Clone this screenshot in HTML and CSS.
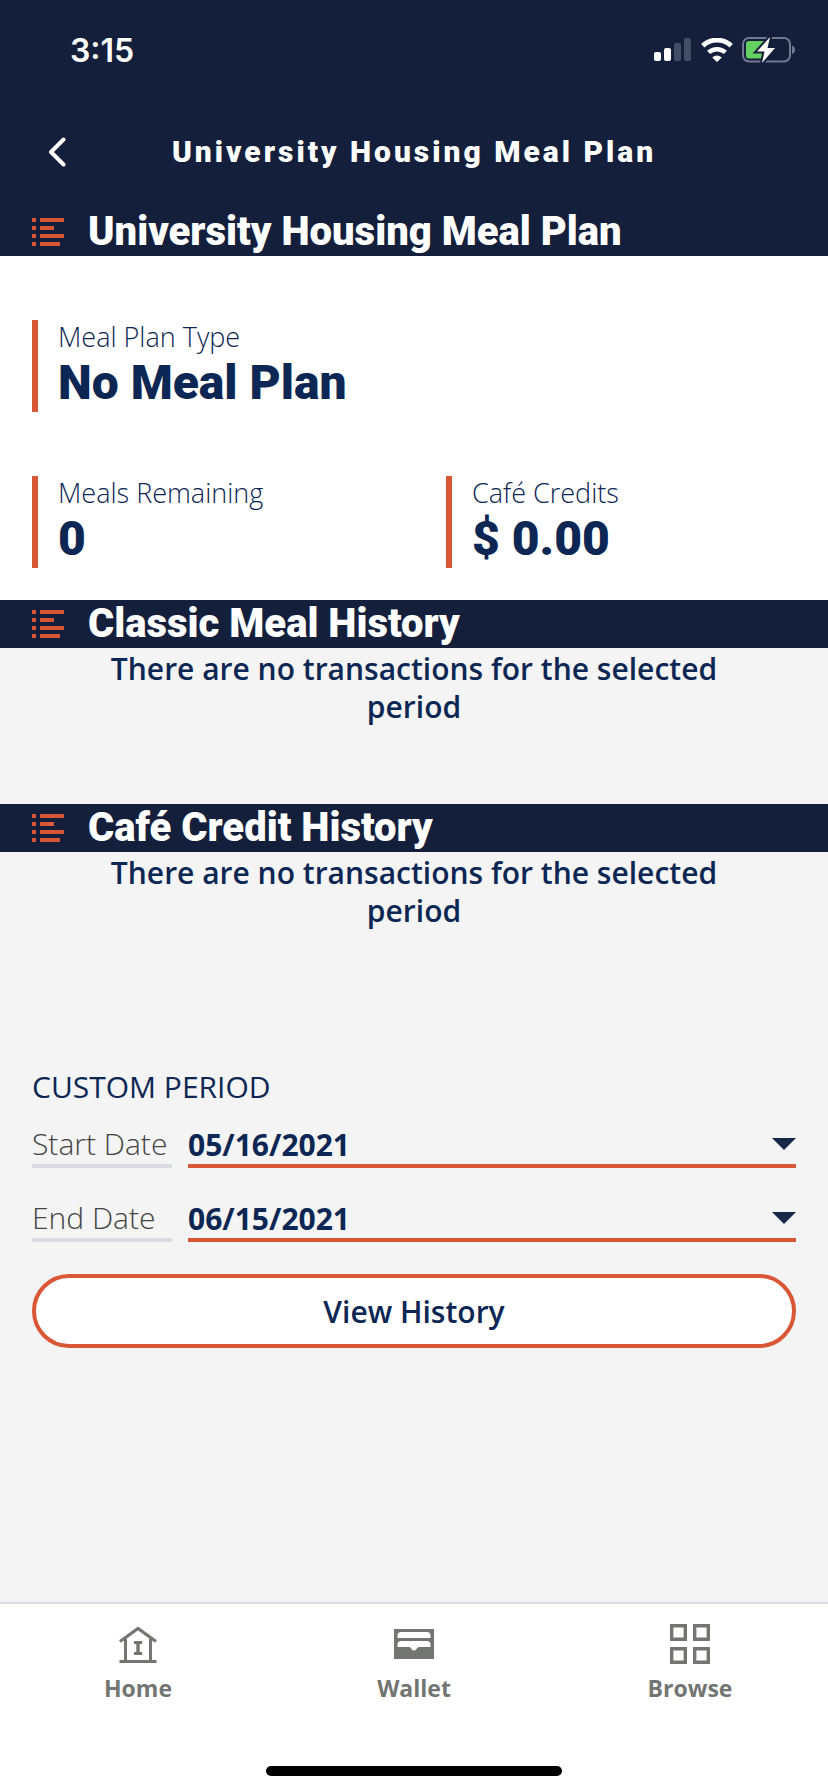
FILE: index.html
```html
<!DOCTYPE html>
<html lang="en">
<head>
<meta charset="utf-8">
<meta name="viewport" content="width=device-width, initial-scale=1">
<title>University Housing Meal Plan</title>
<link rel="stylesheet" href="styles.css">
</head>
<body>
<div class="app">
  <svg class="sprite" width="0" height="0" aria-hidden="true">
    <symbol id="list" viewBox="0 0 32 28">
      <path d="M0 0h4v4H0zM8 0h24v4H8zM0 8h4v4H0zM8 8h14v4H8zM0 16h4v4H0zM8 16h24v4H8zM0 24h4v4H0zM8 24h20v4H8z"/>
    </symbol>
    <symbol id="caret" viewBox="0 0 24 12">
      <path d="M0 0h24L12 12z"/>
    </symbol>
  </svg>

  <header class="top">
    <div class="status">
      <span class="time">3:15</span>
      <div class="indicators">
        <svg width="38" height="24" viewBox="0 0 38 24" role="img" aria-label="Signal strength">
          <rect x="0" y="14" width="7" height="9" rx="2" fill="#fff"/>
          <rect x="10" y="10" width="7" height="13" rx="2" fill="#fff"/>
          <rect x="20" y="5" width="7" height="18" rx="2" fill="#444d66"/>
          <rect x="30" y="0" width="7" height="23" rx="2" fill="#444d66"/>
        </svg>
        <svg width="32" height="24" viewBox="0 0 32 24" role="img" aria-label="Wi-Fi">
          <path d="M1.800 7.800A20.500 20.500 0 0 1 30.200 7.800" fill="none" stroke="#fff" stroke-width="4.800"/>
          <path d="M7.600 14.400A12.600 12.600 0 0 1 24.400 14.400" fill="none" stroke="#fff" stroke-width="4.600"/>
          <path d="M16 24l-4.800-4.600q4.800-3.800 9.600 0z" fill="#fff"/>
        </svg>
        <svg width="54" height="28" viewBox="0 0 54 28" role="img" aria-label="Battery charging">
          <rect x="1" y="2" width="47" height="23.500" rx="6" fill="none" stroke="#727990" stroke-width="2"/>
          <path d="M50 9.500q3 1.200 3 4.300t-3 4.300z" fill="#727990"/>
          <rect x="4" y="5" width="20" height="17.500" rx="3" fill="#65d062"/>
          <path d="M28 1L15 15.500h7.500L20 27 33 12h-7.500z" fill="#fff" stroke="#141f3c" stroke-width="4" paint-order="stroke"/>
        </svg>
      </div>
    </div>
    <div class="titlebar">
      <button class="back" type="button" aria-label="Back">
        <svg width="18" height="30" viewBox="0 0 18 30"><path d="M15.500 2.500L3 15l12.500 12.500" fill="none" stroke="#fff" stroke-width="4" stroke-linecap="round" stroke-linejoin="round"/></svg>
      </button>
      <h1 class="title">University Housing Meal Plan</h1>
    </div>
  </header>

  <main class="content">
    <section>
      <h2 class="bar"><svg class="bar-icon"><use href="#list"/></svg>University Housing Meal Plan</h2>
      <dl class="stats">
        <div class="stat wide"><dt>Meal Plan Type</dt><dd>No Meal Plan</dd></div>
        <div class="stat"><dt>Meals Remaining</dt><dd>0</dd></div>
        <div class="stat"><dt>Café Credits</dt><dd>$ 0.00</dd></div>
      </dl>
    </section>
    <section class="history">
      <h2 class="bar"><svg class="bar-icon"><use href="#list"/></svg>Classic Meal History</h2>
      <p class="empty">There are no transactions for the selected period</p>
    </section>
    <section class="history">
      <h2 class="bar"><svg class="bar-icon"><use href="#list"/></svg>Café Credit History</h2>
      <p class="empty">There are no transactions for the selected period</p>
    </section>
    <form class="period">
      <h3 class="period-title">CUSTOM PERIOD</h3>
      <div class="field">
        <label for="start">Start Date</label>
        <div class="picker"><input id="start" type="text" value="05/16/2021"><svg class="caret"><use href="#caret"/></svg></div>
      </div>
      <div class="field">
        <label for="end">End Date</label>
        <div class="picker"><input id="end" type="text" value="06/15/2021"><svg class="caret"><use href="#caret"/></svg></div>
      </div>
      <button class="view" type="button">View History</button>
    </form>
  </main>

  <footer class="bottom">
    <nav class="tabs">
      <a class="tab" href="#home">
        <svg width="40" height="40" viewBox="0 0 40 40" fill="#737573">
          <path d="M2 17.500L20 4.500l18 13" fill="none" stroke="#737573" stroke-width="3.200"/>
          <path d="M6 15h3v22H6zM31 15h3v22h-3zM1.500 36h37v3h-37z"/>
          <path d="M16 17h8v3h-2.300v8H24v3h-8v-3h2.300v-8H16z"/>
        </svg>
        Home
      </a>
      <a class="tab" href="#wallet">
        <svg width="40" height="40" viewBox="0 0 40 40">
          <path d="M0 5h40v30H0z" fill="#737573"/>
          <path d="M3.500 14v-2.500Q3.500 8 7 8h26q3.500 0 3.500 3.500V14zM3.500 23v-2.500q0-3.500 3.500-3.500h26q3.500 0 3.500 3.500V23H25q-1.500 0-2.500 2-1 1.500-2.500 1.500T17.500 25q-1-2-2.500-2z" fill="#fff"/>
        </svg>
        Wallet
      </a>
      <a class="tab" href="#browse">
        <svg width="40" height="40" viewBox="0 0 40 40" fill="none" stroke="#737573" stroke-width="3.400">
          <path d="M1.700 1.700h13.600v13.600H1.700zM24.700 1.700h13.600v13.600H24.700zM1.700 24.700h13.600v13.600H1.700zM24.700 24.700h13.600v13.600H24.700z"/>
        </svg>
        Browse
      </a>
    </nav>
    <div class="home-indicator"></div>
  </footer>
</div>
</body>
</html>
```
FILE: styles.css
```css
* { box-sizing: border-box; margin: 0; padding: 0; }

body {
  font-family: "Open Sans", sans-serif;
  font-size: 30px;
  color: #0c2753;
  background: #f4f4f4;
}

.app { min-height: 100vh; display: flex; flex-direction: column; }
.sprite { position: absolute; }

.top { background: #141f3c; color: #fff; }
.status {
  display: flex;
  justify-content: space-between;
  align-items: center;
  height: 96px;
  padding: 4px 32px 0 70px;
}
.time { font-family: Inter, sans-serif; font-size: 32px; font-weight: 600; }
.indicators { display: flex; align-items: center; gap: 9px; }

.titlebar {
  display: grid;
  grid-template-columns: 64px 1fr 64px;
  align-items: center;
  height: 112px;
  padding: 0 32px;
}
.back { display: flex; padding: 0 16px; background: none; border: 0; }
.title {
  font-family: Roboto, sans-serif;
  font-size: 30px;
  font-weight: 900;
  line-height: 40px;
  letter-spacing: 3px;
  text-align: center;
  white-space: nowrap;
}

.content { flex: 1; }
.bar {
  display: flex;
  align-items: center;
  gap: 24px;
  padding: 0 32px;
  background: #141f3c;
  color: #fff;
  font-family: Roboto, sans-serif;
  font-size: 40px;
  font-weight: 900;
  line-height: 48px;
}
.bar-icon { width: 32px; height: 28px; fill: #d95737; }

.stats {
  display: grid;
  grid-template-columns: 1fr 1fr;
  gap: 64px;
  padding: 64px 32px 32px;
  background: #fff;
}
.stat { padding-left: 20px; border-left: 6px solid #d95737; }
.wide { grid-column: 1 / -1; }
.stat dt { font-size: 27px; font-weight: 300; line-height: 34px; }
.stat dd { font-family: Roboto, sans-serif; font-size: 48px; font-weight: 900; line-height: 58px; }

.history { padding-bottom: 78px; }
.empty {
  padding: 2px 100px 0;
  font-weight: 600;
  line-height: 38px;
  text-align: center;
}

.period { padding: 60px 32px; }
.period-title { font-size: 30px; font-weight: 400; line-height: 38px; }
.field {
  display: grid;
  grid-template-columns: 140px 1fr;
  gap: 16px;
  margin-top: 30px;
}
.period-title + .field { margin-top: 18px; }
.field label {
  color: #444;
  font-size: 30px;
  font-weight: 300;
  line-height: 40px;
  border-bottom: 4px solid #d9dce2;
  white-space: nowrap;
}
.picker { display: flex; align-items: center; border-bottom: 4px solid #d95737; }
.picker input {
  flex: 1;
  min-width: 0;
  height: 40px;
  border: 0;
  outline: 0;
  background: none;
  color: inherit;
  font: 700 30px "Open Sans", sans-serif;
}
.caret { width: 24px; height: 12px; fill: #182848; }
.view {
  width: 100%;
  height: 74px;
  margin-top: 32px;
  border: 4px solid #d95737;
  border-radius: 37px;
  background: #fff;
  color: inherit;
  font: 600 30px "Open Sans", sans-serif;
}

.bottom { background: #fff; border-top: 2px solid #d9dce2; }
.tabs { display: grid; grid-template-columns: repeat(3, 1fr); padding-top: 20px; }
.tab {
  display: flex;
  flex-direction: column;
  align-items: center;
  gap: 8px;
  color: #737573;
  font-size: 23px;
  font-weight: 700;
  line-height: 32px;
  text-decoration: none;
}
.home-indicator {
  width: 296px;
  height: 10px;
  margin: 62px auto 16px;
  border-radius: 5px;
  background: #000;
}
```
